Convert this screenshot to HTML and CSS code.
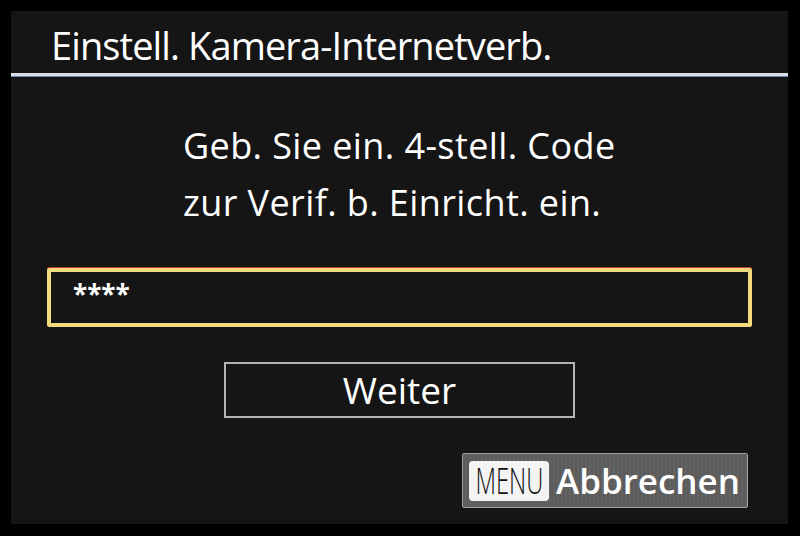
FILE: index.html
```html
<!DOCTYPE html>
<html>
<head>
  <link rel="stylesheet" href="styles.css">
</head>
<body>
  <div class="screen">
    <div class="title">Einstell. Kamera-Internetverb.</div>
    <div class="message">
      <p>Geb. Sie ein. 4-stell. Code</p>
      <p>zur Verif. b. Einricht. ein.</p>
    </div>
    <div class="code-field">****</div>
    <div class="next-row">
      <button class="next">Weiter</button>
    </div>
    <div class="cancel-row">
      <button class="cancel"><span class="menu-key"><span>MENU</span></span>Abbrechen</button>
    </div>
  </div>
</body>
</html>
```

FILE: styles.css
```css
body {
  margin: 0;
  background-color: #000;
  font-family: "Open Sans", "DejaVu Sans", sans-serif;
  color: #fff;
}

.screen {
  margin: 11px;
  width: 777px;
  height: 513px;
  background-color: #151515;
  display: flex;
  flex-direction: column;
}

.title {
  height: 65px;
  box-sizing: border-box;
  padding: 6px 0 0 40px;
  font-size: 38px;
  line-height: 56px;
  letter-spacing: -0.9px;
  border-bottom: 3px solid #d9dde6;
  box-shadow: 0 1px 0 #6f86b0;
}

.message {
  padding-left: 172px;
  margin-top: 41px;
  font-size: 36px;
  letter-spacing: 0.4px;
}

.message p {
  margin: 0;
  line-height: 57px;
}

.code-field {
  margin: 37px 0 0 36px;
  width: 705px;
  height: 59px;
  box-sizing: border-box;
  border: 4px solid #f4da7c;
  border-radius: 2px;
  box-shadow: 0 -1px 0 #b8402a;
  padding-left: 22px;
  font-size: 26px;
  font-weight: bold;
  line-height: 44px;
}

.next-row {
  display: flex;
  justify-content: center;
  margin-top: 35px;
}

.next {
  width: 351px;
  height: 56px;
  background: none;
  border: 2px solid #b4b4b8;
  color: #fff;
  font-family: inherit;
  font-size: 37px;
  padding: 0;
  line-height: 50px;
}

.cancel-row {
  display: flex;
  justify-content: flex-end;
  margin: 35px 40px 0 0;
}

.cancel {
  width: 286px;
  height: 55px;
  display: flex;
  align-items: center;
  gap: 7px;
  padding: 0 0 0 6px;
  background-color: #5d5d5d;
  background-image: repeating-linear-gradient(90deg, #5b5b5b 0, #5b5b5b 2px, #626262 2px, #626262 4px);
  border: 1px solid #a0a0a0;
  border-radius: 2px;
  color: #fff;
  font-family: inherit;
  font-size: 35px;
  font-weight: 600;
}

.menu-key {
  width: 80px;
  height: 40px;
  flex-shrink: 0;
  display: flex;
  justify-content: center;
  align-items: center;
  background-color: #f4f4f4;
  border-radius: 4px;
  color: #111;
  font-size: 36px;
  font-weight: 300;
}

.menu-key span {
  display: inline-block;
  margin: 0 -20px;
  transform: scaleX(0.66);
  line-height: 40px;
}
```
